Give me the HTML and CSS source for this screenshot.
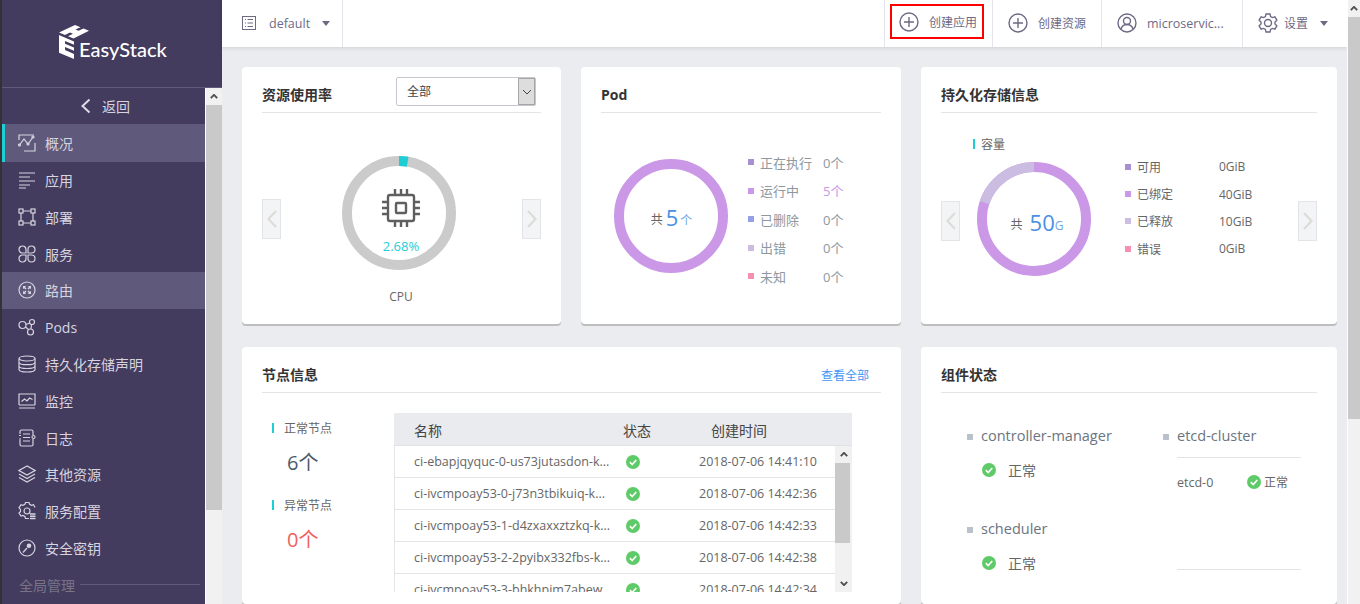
FILE: index.html
```html
<!DOCTYPE html>
<html lang="zh-CN">
<head>
    <meta charset="UTF-8">
    <title>EasyStack 概况</title>
    <link rel="stylesheet" href="styles.css">
</head>
<body>
    <aside class="sidebar">
        <div class="logo">
            <svg class="logo-mark" viewBox="0 0 32 35" width="32" height="35">
                <path d="M0 7.500 16 0l5.500 2.200-5 2.400 3 1.200 5-2.400L30 5.800 14.500 13.500 9 11.200l5-2.400-3-1.200-5 2.400z"/>
                <path d="M0 10l15 6.500v3.300L6 16v2.800l9 3.800v3.200l-9-3.800v3l9 3.900V34L0 27.800z"/>
            </svg>
            <span class="logo-text">EasyStack</span>
        </div>
        <div class="side-body">
            <nav class="nav">
                <a class="back" href="#">
                    <svg class="back-arrow" viewBox="0 0 11 16" width="11" height="16"><path d="M9.500 1.500 2.500 8l7 6.500"/></svg>
                    返回
                </a>
                <a class="nav-item active" href="#">
                    <svg class="ico" viewBox="0 0 18 18"><path d="M1 6V1h15M17 9v8H6"/><path d="M1.500 11 6 5l4 5 5-7"/><circle cx="1.500" cy="11" r="1"/><circle cx="10" cy="10" r="1"/><circle cx="15" cy="3" r="1"/></svg>
                    概况
                </a>
                <a class="nav-item" href="#">
                    <svg class="ico" viewBox="0 0 18 18"><path d="M1 2h16M1 6h11M1 10h16M1 14h11M1 17h7"/></svg>
                    应用
                </a>
                <a class="nav-item" href="#">
                    <svg class="ico" viewBox="0 0 18 18"><rect x="1" y="1" width="4" height="4"/><rect x="13" y="1" width="4" height="4"/><rect x="1" y="13" width="4" height="4"/><rect x="13" y="13" width="4" height="4"/><path d="M5 3h8M5 15h8M3 5v8M15 5v8"/></svg>
                    部署
                </a>
                <a class="nav-item" href="#">
                    <svg class="ico" viewBox="0 0 18 18"><path d="M8 8H4.500A3.500 3.500 0 1 1 8 4.500zM10 8h3.500A3.500 3.500 0 1 0 10 4.500zM8 10H4.500A3.500 3.500 0 1 0 8 13.500zM10 10h3.500a3.500 3.500 0 1 1-3.500 3.500z"/></svg>
                    服务
                </a>
                <a class="nav-item hover" href="#">
                    <svg class="ico" viewBox="0 0 18 18"><circle cx="9" cy="9" r="8"/><path class="solid" d="M5 5h3L7.200 6.200 8.500 7.500 7.500 8.500 6.200 7.200 5 8zM13 5v3l-1.200-.8-1.300 1.300-1-1 1.300-1.300L10 5zM5 13v-3l1.200.8 1.300-1.300 1 1-1.300 1.300L8 13zM13 13h-3l.8-1.200-1.300-1.300 1-1 1.300 1.300L13 10z"/></svg>
                    路由
                </a>
                <a class="nav-item" href="#">
                    <svg class="ico" viewBox="0 0 18 18"><circle cx="4.500" cy="7" r="3.500"/><circle cx="14" cy="4" r="2.500"/><circle cx="12.500" cy="14" r="3"/><path d="M8 6.500l3.700-1.500M7.500 9l3 2.500M13.500 6.500l-.5 4.500"/></svg>
                    Pods
                </a>
                <a class="nav-item" href="#">
                    <svg class="ico" viewBox="0 0 18 18"><ellipse cx="9" cy="3.500" rx="8" ry="2.500"/><path d="M1 3.500v11C1 16 4.500 17 9 17s8-1 8-2.500v-11M1 7.200c0 1.500 3.500 2.500 8 2.500s8-1 8-2.500M1 11c0 1.500 3.500 2.500 8 2.500s8-1 8-2.500"/></svg>
                    持久化存储声明
                </a>
                <a class="nav-item" href="#">
                    <svg class="ico" viewBox="0 0 18 18"><path d="M1 13V2h16v11M1 16h16"/><path d="M1 13h16M3.500 9.500 6.500 7l2.500 2 2.500-3 3 1.500"/></svg>
                    监控
                </a>
                <a class="nav-item" href="#">
                    <svg class="ico" viewBox="0 0 18 18"><path d="M2 5V2.500Q2 1 3.500 1h10Q15 1 15 2.500V6M15 10v5.500q0 1.500-1.500 1.500h-10Q2 17 2 15.500V11"/><path d="M1 6.500h2M1 10h2M5 5h7M5 8.500h7M5 12h7"/><circle cx="15.500" cy="8" r="1.500"/></svg>
                    日志
                </a>
                <a class="nav-item" href="#">
                    <svg class="ico" viewBox="0 0 18 18"><path d="M9 1 1 5.500 9 10l8-4.500zM1 9l8 4.500L17 9M1 12.500 9 17l8-4.500"/></svg>
                    其他资源
                </a>
                <a class="nav-item" href="#">
                    <svg class="ico" viewBox="0 0 18 18"><path d="M11 16.500H7.500l-.6-2-1.900-1-2 .6L1 11l1.500-1.600v-2L1 5.800 3 2.700l2 .6 1.900-1 .6-1.800h3.500l.6 1.800 1.900 1 2-.6 1.500 2.800"/><circle cx="9" cy="9" r="3"/><path class="thick" d="M12 12h5.500M12 14.200h5.500M12 16.500h5.500"/></svg>
                    服务配置
                </a>
                <a class="nav-item" href="#">
                    <svg class="ico" viewBox="0 0 18 18"><circle cx="9" cy="9" r="8"/><path d="M5 13.500l4-4.500"/><circle class="solid" cx="11" cy="6.800" r="2.300"/></svg>
                    安全密钥
                </a>
                <div class="nav-group"><span>全局管理</span><i></i></div>
            </nav>
            <div class="scrollbar side-scroll">
                <span class="sb-btn"><svg viewBox="0 0 10 6" width="8" height="5"><path d="M1 5l4-4 4 4"/></svg></span>
                <span class="sb-thumb"></span>
            </div>
        </div>
    </aside>

    <div class="main">
        <header class="topbar">
            <div class="ns">
                <svg class="list-ico" viewBox="0 0 14 14" width="14" height="14"><rect x=".5" y=".5" width="13" height="13"/><path d="M3 3.500h1M3 7h1M3 10.500h1M5.500 3.500H11M5.500 7H11M5.500 10.500H11"/></svg>
                <span>default</span>
                <i class="caret"></i>
            </div>
            <div class="actions">
                <a class="action first" href="#">
                    <span class="mark">
                        <svg class="act-ico" viewBox="0 0 20 20"><circle cx="10" cy="10" r="9"/><path d="M10 5v10M5 10h10"/></svg>
                        创建应用
                    </span>
                </a>
                <a class="action" href="#">
                    <svg class="act-ico" viewBox="0 0 20 20"><circle cx="10" cy="10" r="9"/><path d="M10 5v10M5 10h10"/></svg>
                    创建资源
                </a>
                <a class="action user" href="#">
                    <svg class="act-ico" viewBox="0 0 20 20"><circle cx="10" cy="10" r="9"/><circle cx="10" cy="8" r="3.500"/><path d="M4 16c1-3 3.500-4.500 6-4.500s5 1.500 6 4.500"/></svg>
                    <span class="user-name">microservic...</span>
                </a>
                <a class="action setting" href="#">
                    <svg class="act-ico" viewBox="0 0 20 20"><path d="M8 1h4l.6 2.600 1.800 1 2.500-.8 2 3.400-1.900 1.800v2l1.900 1.800-2 3.400-2.500-.8-1.800 1L12 19H8l-.6-2.600-1.800-1-2.500.8-2-3.400L3 11V9L1.100 7.200l2-3.400 2.500.8 1.800-1z"/><circle cx="10" cy="10" r="3.500"/></svg>
                    设置
                    <i class="caret"></i>
                </a>
            </div>
        </header>

        <main class="content">
            <section class="card">
                <div class="card-head">
                    <h2>资源使用率</h2>
                    <div class="select"><span>全部</span><b><svg viewBox="0 0 10 6" width="10" height="6"><path d="M1 1l4 4 4-4"/></svg></b></div>
                </div>
                <div class="slide cpu-slide">
                    <a class="arrow cpu-arrow" href="#"><svg viewBox="0 0 12 20" width="12" height="20"><path d="M10 2 2.500 10 10 18"/></svg></a>
                    <div class="cpu-box">
                        <div class="donut">
                            <svg viewBox="0 0 114 114" width="114" height="114">
                                <circle class="ring" cx="57" cy="57" r="52" stroke="#cbcbcb"/>
                                <circle class="ring" cx="57" cy="57" r="52" stroke="#1fcdd4" stroke-dasharray="8.750 318"/>
                            </svg>
                            <div class="donut-in cpu-in">
                                <svg class="chip" viewBox="0 0 40 40" width="40" height="40"><rect x="7" y="7" width="26" height="26" rx="2"/><rect x="15" y="15" width="10" height="10" rx="1"/><path d="M14 1v6M20 1v6M26 1v6M14 33v6M20 33v6M26 33v6M1 14h6M1 20h6M1 26h6M33 14h6M33 20h6M33 26h6"/></svg>
                                <span class="pct">2.68%</span>
                            </div>
                        </div>
                        <div class="cpu-name">CPU</div>
                    </div>
                    <a class="arrow cpu-arrow right" href="#"><svg viewBox="0 0 12 20" width="12" height="20"><path d="M2 2l7.500 8L2 18"/></svg></a>
                </div>
            </section>

            <section class="card">
                <div class="card-head"><h2 class="latin">Pod</h2></div>
                <div class="pod-body">
                    <div class="donut pod-donut">
                        <svg viewBox="0 0 114 114" width="114" height="114"><circle class="ring" cx="57" cy="57" r="52" stroke="#ca98e6"/></svg>
                        <div class="donut-in total"><span>共</span><em>5</em><small>个</small></div>
                    </div>
                    <ul class="legend pod-legend">
                        <li><i class="c1"></i><span>正在执行</span><b>0个</b></li>
                        <li><i class="c2"></i><span>运行中</span><b class="on">5个</b></li>
                        <li><i class="c3"></i><span>已删除</span><b>0个</b></li>
                        <li><i class="c4"></i><span>出错</span><b>0个</b></li>
                        <li><i class="c5"></i><span>未知</span><b>0个</b></li>
                    </ul>
                </div>
            </section>

            <section class="card">
                <div class="card-head"><h2>持久化存储信息</h2></div>
                <div class="slide store-slide">
                    <a class="arrow store-arrow" href="#"><svg viewBox="0 0 12 20" width="12" height="20"><path d="M10 2 2.500 10 10 18"/></svg></a>
                    <div class="store-box">
                        <div class="tag store-tag">容量</div>
                        <div class="donut">
                            <svg viewBox="0 0 114 114" width="114" height="114">
                                <circle class="ring" cx="57" cy="57" r="52" stroke="#ca98e6"/>
                                <circle class="ring" cx="57" cy="57" r="52" stroke="#cbbde2" stroke-dasharray="65.350 261.400" stroke-dashoffset="65.350"/>
                            </svg>
                            <div class="donut-in total store-total"><span>共</span><em>50</em><small>G</small></div>
                        </div>
                    </div>
                    <ul class="legend store-legend">
                        <li><i class="c1"></i><span>可用</span><b>0GiB</b></li>
                        <li><i class="c2"></i><span>已绑定</span><b>40GiB</b></li>
                        <li><i class="c4"></i><span>已释放</span><b>10GiB</b></li>
                        <li><i class="c5"></i><span>错误</span><b>0GiB</b></li>
                    </ul>
                    <a class="arrow store-arrow right" href="#"><svg viewBox="0 0 12 20" width="12" height="20"><path d="M2 2l7.500 8L2 18"/></svg></a>
                </div>
            </section>

            <section class="card wide">
                <div class="card-head"><h2>节点信息</h2><a class="more" href="#">查看全部</a></div>
                <div class="node-body">
                    <div class="node-sum">
                        <div class="tag">正常节点</div>
                        <div class="num">6个</div>
                        <div class="tag">异常节点</div>
                        <div class="num bad">0个</div>
                    </div>
                    <div class="table">
                        <div class="thead"><span class="th-name">名称</span><span class="th-state">状态</span><span class="th-time">创建时间</span></div>
                        <div class="tbody">
                            <div class="rows">
                                <div class="row"><span class="name">ci-ebapjqyquc-0-us73jutasdon-k...</span><svg class="ok" viewBox="0 0 14 14"><circle cx="7" cy="7" r="7"/><path d="M3.800 7.200 6.200 9.500 10.300 5"/></svg><span class="time">2018-07-06 14:41:10</span></div>
                                <div class="row"><span class="name">ci-ivcmpoay53-0-j73n3tbikuiq-k...</span><svg class="ok" viewBox="0 0 14 14"><circle cx="7" cy="7" r="7"/><path d="M3.800 7.200 6.200 9.500 10.300 5"/></svg><span class="time">2018-07-06 14:42:36</span></div>
                                <div class="row"><span class="name">ci-ivcmpoay53-1-d4zxaxxztzkq-k...</span><svg class="ok" viewBox="0 0 14 14"><circle cx="7" cy="7" r="7"/><path d="M3.800 7.200 6.200 9.500 10.300 5"/></svg><span class="time">2018-07-06 14:42:33</span></div>
                                <div class="row"><span class="name">ci-ivcmpoay53-2-2pyibx332fbs-k...</span><svg class="ok" viewBox="0 0 14 14"><circle cx="7" cy="7" r="7"/><path d="M3.800 7.200 6.200 9.500 10.300 5"/></svg><span class="time">2018-07-06 14:42:38</span></div>
                                <div class="row"><span class="name">ci-ivcmpoay53-3-bhkhpjm7abew</span><svg class="ok" viewBox="0 0 14 14"><circle cx="7" cy="7" r="7"/><path d="M3.800 7.200 6.200 9.500 10.300 5"/></svg><span class="time">2018-07-06 14:42:34</span></div>
                            </div>
                            <div class="scrollbar table-scroll">
                                <span class="sb-btn"><svg viewBox="0 0 10 6" width="8" height="5"><path d="M1 5l4-4 4 4"/></svg></span>
                                <span class="sb-thumb"></span>
                                <span class="sb-btn down"><svg viewBox="0 0 10 6" width="8" height="5"><path d="M1 1l4 4 4-4"/></svg></span>
                            </div>
                        </div>
                    </div>
                </div>
            </section>

            <section class="card">
                <div class="card-head"><h2>组件状态</h2></div>
                <div class="parts">
                    <div class="part">
                        <div class="part-name">controller-manager</div>
                        <div class="part-state"><svg class="ok" viewBox="0 0 14 14"><circle cx="7" cy="7" r="7"/><path d="M3.800 7.200 6.200 9.500 10.300 5"/></svg>正常</div>
                    </div>
                    <div class="part etcd">
                        <div class="part-name">etcd-cluster</div>
                        <div class="etcd-list">
                            <div class="etcd-row"><span>etcd-0</span><svg class="ok" viewBox="0 0 14 14"><circle cx="7" cy="7" r="7"/><path d="M3.800 7.200 6.200 9.500 10.300 5"/></svg><span>正常</span></div>
                        </div>
                    </div>
                    <div class="part">
                        <div class="part-name">scheduler</div>
                        <div class="part-state"><svg class="ok" viewBox="0 0 14 14"><circle cx="7" cy="7" r="7"/><path d="M3.800 7.200 6.200 9.500 10.300 5"/></svg>正常</div>
                    </div>
                </div>
            </section>
        </main>
    </div>

    <div class="scrollbar page-scroll">
        <span class="sb-btn"><svg viewBox="0 0 10 6" width="8" height="5"><path d="M1 5l4-4 4 4"/></svg></span>
        <span class="sb-thumb"></span>
    </div>
</body>
</html>
```

FILE: styles.css
```css
* {
    box-sizing: border-box;
}
html, body {
    height: 604px;
    overflow: hidden;
}
body {
    margin: 0;
    display: flex;
    background-color: #ebecf0;
    border-left: 2px solid #333;
    color: #666;
    font-family: "Open Sans", "Noto Sans CJK SC", sans-serif;
    font-size: 12px;
}
a {
    color: inherit;
    text-decoration: none;
}
ul {
    margin: 0;
    padding: 0;
    list-style: none;
}

/* scrollbars */
.scrollbar {
    display: flex;
    flex-direction: column;
    flex: none;
    background-color: #f1f1f1;
}
.sb-btn {
    height: 17px;
    flex: none;
    display: flex;
    align-items: center;
    justify-content: center;
}
.sb-btn svg {
    fill: none;
    stroke: #505050;
    stroke-width: 2.400;
}
.sb-btn.down {
    margin-top: auto;
}
.sb-thumb {
    flex: none;
    background-color: #c9c9c9;
}

/* sidebar */
.sidebar {
    width: 220px;
    flex: none;
    display: flex;
    flex-direction: column;
    background-color: #443c5e;
}
.logo {
    height: 88px;
    flex: none;
    display: flex;
    align-items: flex-end;
    padding: 0 0 26px 57px;
    border-bottom: 1px solid #5f5a78;
    color: #fff;
}
.logo-mark {
    fill: #fff;
    flex: none;
    margin-bottom: 1px;
}
.logo-text {
    margin-left: -12px;
    font-family: "Lato", sans-serif;
    font-size: 20px;
    font-weight: 500;
    line-height: 24px;
}
.side-body {
    flex: 1;
    display: flex;
    min-height: 0;
    background-color: #fff;
}
.nav {
    width: 203px;
    flex: none;
    background-color: #443c5e;
    color: #d6d4e0;
    font-size: 14px;
}
.back {
    height: 36px;
    display: flex;
    align-items: center;
    padding-left: 78px;
    gap: 11px;
}
.back-arrow {
    fill: none;
    stroke: #dcdbe6;
    stroke-width: 2;
}
.nav-item {
    height: 36.800px;
    display: flex;
    align-items: center;
    padding-left: 16px;
    gap: 9px;
}
.nav-item.active {
    height: 37.600px;
    padding-left: 13px;
    background-color: #5f5a7b;
    border-left: 3px solid #1fcdd4;
}
.nav-item.hover {
    background-color: #5f5a7b;
}
.ico {
    width: 18px;
    height: 18px;
    flex: none;
    fill: none;
    stroke: #d6d4e0;
    stroke-width: 1.200;
}
.ico .solid {
    fill: #d6d4e0;
    stroke: none;
}
.ico .thick {
    stroke-width: 1.400;
}
.nav-group {
    display: flex;
    align-items: center;
    height: 37px;
    padding: 0 5px 0 17px;
    gap: 5px;
    color: #777488;
}
.nav-group i {
    flex: 1;
    height: 1px;
    background-color: #5f5a78;
}
.side-scroll {
    width: 16px;
    margin-left: 1px;
}
.side-scroll .sb-thumb {
    height: 405px;
}

/* top bar */
.main {
    width: 1125px;
    flex: none;
    display: flex;
    flex-direction: column;
}
.topbar {
    height: 47px;
    flex: none;
    display: flex;
    justify-content: space-between;
    background-color: #fff;
    box-shadow: 0 1px 4px rgba(0, 0, 0, 0.12);
    color: #6e6a86;
}
.ns {
    width: 121px;
    display: flex;
    align-items: center;
    padding: 0 0 1px 20px;
    border-right: 1px solid #e3e5ea;
    font-size: 12.500px;
}
.list-ico {
    fill: none;
    stroke: #6e6a86;
    margin-right: 13px;
}
.caret {
    display: inline-block;
    border-top: 5px solid #6e6a86;
    border-left: 4px solid transparent;
    border-right: 4px solid transparent;
}
.ns .caret {
    margin-left: 12px;
}
.actions {
    display: flex;
}
.action {
    width: 109px;
    height: 47px;
    display: flex;
    align-items: center;
    padding: 0 0 1px 15px;
    border-left: 1px solid #e3e5ea;
    gap: 10px;
}
.action.first {
    width: 108px;
    padding: 0 0 0 5px;
}
.mark {
    width: 94px;
    height: 35px;
    margin-bottom: 5px;
    display: flex;
    align-items: center;
    gap: 10px;
    padding: 1px 0 0 7px;
    border: 2px solid #f00;
}
.action.user {
    width: 141px;
}
.action.setting {
    width: 105px;
    gap: 6px;
}
.action.setting .caret {
    margin-left: 6px;
}
.user-name {
    white-space: nowrap;
    font-size: 12.500px;
}
.act-ico {
    width: 20px;
    height: 20px;
    flex: none;
    fill: none;
    stroke: #6e6a86;
    stroke-width: 1.400;
}

/* cards */
.content {
    flex: 1;
    display: grid;
    grid-template-columns: 319px 320px 416px;
    grid-template-rows: 257px 257px;
    gap: 23px 20px;
    padding: 20px;
}
.card {
    min-width: 0;
    padding: 0 20px;
    background-color: #fff;
    border-radius: 4px;
    box-shadow: 0 2px 0 #bdbdbd;
    overflow: hidden;
}
.card.wide {
    grid-column: span 2;
}
.card-head {
    height: 46px;
    display: flex;
    align-items: center;
    justify-content: space-between;
    padding-top: 8px;
    border-bottom: 1px solid #e3e4e8;
}
.card-head h2 {
    margin: 0;
    font-size: 14px;
    font-weight: 700;
    color: #333;
}
.card-head h2.latin {
    margin-top: 2px;
}
.more {
    margin: 3px 12px 0 0;
    color: #3f97f3;
}
.select {
    width: 140px;
    height: 29px;
    display: flex;
    justify-content: space-between;
    align-self: flex-start;
    margin: 2px 5px 0 0;
    padding-left: 10px;
    border: 1px solid #c4c7cc;
    border-radius: 2px;
    color: #444;
    font-size: 12px;
    line-height: 27px;
}
.select b {
    width: 17px;
    display: flex;
    align-items: center;
    justify-content: center;
    background-color: #ddd;
    border: 1px solid #a6a6a6;
}
.select svg {
    fill: none;
    stroke: #444;
}

/* donuts */
.donut {
    position: relative;
    width: 114px;
    height: 114px;
    flex: none;
}
.donut svg {
    display: block;
}
.ring {
    fill: none;
    stroke-width: 10;
    transform: rotate(-90deg);
    transform-origin: 57px 57px;
}
.donut-in {
    position: absolute;
    top: 0;
    right: 0;
    bottom: 0;
    left: 0;
    display: flex;
    align-items: center;
    justify-content: center;
}
.cpu-in {
    flex-direction: column;
    justify-content: flex-start;
    padding: 32px 0 0 4px;
}
.chip {
    fill: none;
    stroke: #5f5f5f;
    stroke-width: 2.400;
}
.pct {
    margin-top: 9px;
    color: #1fcdd4;
    font-size: 13px;
    line-height: 18px;
}
.total {
    padding: 5px 0 0 1px;
    color: #666;
    font-size: 12px;
}
.total em {
    margin: -3px 2px 0 3px;
    font-style: normal;
    font-size: 22px;
    line-height: 26px;
    color: #4a90e2;
}
.total small {
    font-size: 12px;
    color: #6ea6e8;
    padding-top: 3px;
}
.store-total {
    padding: 9px 0 0 6px;
}
.store-total em {
    margin: -3px 0 0 7px;
}

/* slides */
.slide {
    display: flex;
    align-items: flex-start;
}
.arrow {
    width: 19px;
    height: 40px;
    flex: none;
    display: flex;
    align-items: center;
    justify-content: center;
    background-color: #f3f4f5;
    border: 1px solid #e2e4e8;
}
.arrow svg {
    fill: none;
    stroke: #dddcd8;
    stroke-width: 2.200;
}
.arrow.right {
    margin-left: auto;
}
.cpu-slide {
    padding-top: 43px;
}
.cpu-arrow {
    margin-top: 43px;
}
.cpu-box {
    margin-left: 61px;
    text-align: center;
}
.cpu-name {
    margin-top: 18px;
    padding-left: 4px;
    line-height: 18px;
}
.store-slide {
    padding-top: 23px;
}
.store-arrow {
    margin-top: 65px;
}
.store-box {
    margin-left: 17px;
}
.store-legend {
    margin: 17px 0 0 34px;
}
.tag {
    display: flex;
    align-items: center;
    height: 16px;
    font-size: 12px;
}
.tag::before {
    content: "";
    width: 2px;
    height: 10px;
    margin-right: 10px;
    background-color: #1fcdd4;
}
.store-tag {
    margin-left: -4px;
    margin-bottom: 10px;
}
.store-tag::before {
    margin-right: 6px;
}

/* legends */
.legend li {
    display: flex;
    align-items: center;
}
.legend i {
    width: 6px;
    height: 6px;
    margin-right: 6px;
    flex: none;
}
.legend b {
    font-weight: 400;
}
.c1 { background-color: #a78fd3; }
.c2 { background-color: #ca98e6; }
.c3 { background-color: #979fe6; }
.c4 { background-color: #cbbde2; }
.c5 { background-color: #f78fb0; }
.pod-body {
    display: flex;
    align-items: flex-start;
    padding: 35px 0 0 13px;
}
.pod-donut {
    margin-top: 11px;
}
.pod-legend {
    margin-left: 20px;
}
.pod-legend li {
    height: 28.500px;
    font-size: 13px;
    color: #8d989f;
}
.pod-legend span {
    width: 63px;
}
.pod-legend .on {
    color: #ca98e6;
}
.store-legend li {
    height: 27.400px;
}
.store-legend span {
    width: 82px;
}

/* node table */
.node-body {
    display: flex;
    padding-top: 20px;
}
.node-sum {
    width: 132px;
    flex: none;
    padding: 7px 0 0 10px;
}
.num {
    height: 61px;
    padding: 13px 0 0 15px;
    font-size: 20px;
    line-height: 28px;
    color: #4d5b6b;
}
.num.bad {
    color: #f2605f;
}
.table {
    width: 458px;
    height: 179px;
    flex: none;
    overflow: hidden;
}
.thead {
    height: 33px;
    display: flex;
    align-items: center;
    padding-top: 1px;
    background-color: #e9ebef;
    border-bottom: 1px solid #e0e2e6;
    color: #444;
    font-size: 14px;
}
.th-name {
    width: 229px;
    padding-left: 20px;
}
.th-state {
    width: 88px;
}
.tbody {
    display: flex;
    height: 146px;
    border-left: 1px solid #e3e5e9;
}
.rows {
    width: 440px;
    flex: none;
}
.row {
    height: 32px;
    display: flex;
    align-items: center;
    padding-left: 19px;
    border-bottom: 1px solid #e3e5e9;
    font-size: 12.500px;
}
.name {
    width: 198px;
    flex: none;
    white-space: nowrap;
}
.ok {
    width: 14px;
    height: 14px;
    flex: none;
    fill: #5fcb68;
    stroke: none;
}
.ok path {
    fill: none;
    stroke: #fff;
    stroke-width: 1.600;
}
.row .ok {
    margin: 0 59px 0 14px;
}
.table-scroll {
    width: 17px;
    height: 146px;
}
.table-scroll .sb-thumb {
    width: 15px;
    height: 80px;
}

/* components */
.parts {
    display: grid;
    grid-template-columns: 196px 1fr;
    grid-template-rows: 93px 93px;
    padding: 32px 0 0 26px;
}
.part-name {
    height: 20px;
    display: flex;
    align-items: center;
    font-size: 14.500px;
    color: #6b7480;
}
.part-name::before {
    content: "";
    width: 6px;
    height: 6px;
    margin: 3px 8px 0 0;
    background-color: #b9c2ca;
}
.part-state {
    display: flex;
    align-items: center;
    gap: 12px;
    margin: 15px 0 0 15px;
    height: 20px;
    font-size: 14px;
}
.etcd {
    grid-row: span 2;
}
.etcd-list {
    width: 124px;
    height: 113px;
    margin: 12px 0 0 14px;
    padding-top: 14px;
    border-top: 1px solid #e3e4e8;
    border-bottom: 1px solid #e3e4e8;
}
.etcd-row {
    display: flex;
    align-items: center;
    height: 20px;
    font-size: 12.500px;
}
.etcd-row span:first-child {
    width: 70px;
}
.etcd-row .ok {
    margin-right: 3px;
}
.etcd-row span:last-child {
    font-size: 12px;
}

/* window scrollbar */
.page-scroll {
    width: 13px;
    border-left: 1px solid #fff;
}
.page-scroll .sb-thumb {
    height: 402px;
}
```
